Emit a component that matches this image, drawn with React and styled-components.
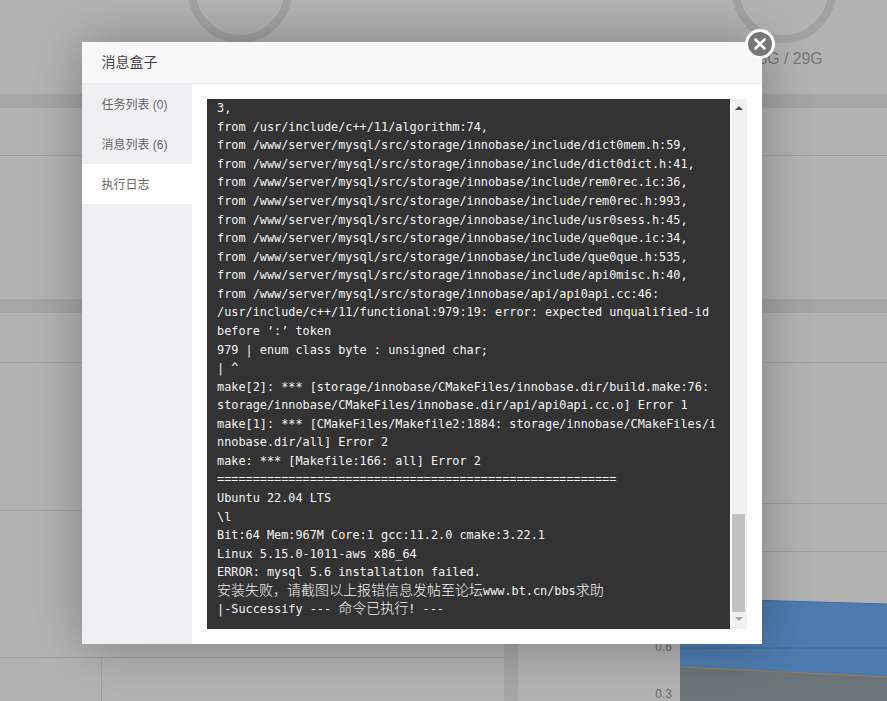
import React from "react";
import styled, { createGlobalStyle } from "styled-components";

const Global = createGlobalStyle`
  html, body { margin: 0; padding: 0; height: 701px; overflow: hidden; background: #fff; }
  * { box-sizing: border-box; }
  body { font-family: "Liberation Sans", "Noto Sans CJK SC", sans-serif; }
`;

const Page = styled.div`
  display: flex;
  flex-direction: column;
  height: 701px;
  overflow: hidden;
`;
const GaugeRow = styled.div`
  height: 94px;
  flex: none;
  display: flex;
  padding-left: 188px;
  gap: 440px;
`;
const Gauge = styled.div`
  width: 104px;
  display: flex;
  flex-direction: column;
  align-items: center;
`;
const Ring = styled.div`
  width: 104px;
  height: 104px;
  flex: none;
  margin-top: -61px;
  border: 8px solid #e8e8e8;
  border-radius: 50%;
`;
const GaugeText = styled.div`
  margin-top: 7px;
  font-size: 15.8px;
  line-height: 18px;
  white-space: nowrap;
  color: #aaa;
`;
const Band = styled.div`
  height: 14px;
  flex: none;
  background: #ececec;
`;
const Stats = styled.div`
  height: 191px;
  flex: none;
  padding-top: 47px;
  & > div { border-top: 1px solid #e4e4e4; }
`;
const Rule = styled.div`
  height: 1px;
`;
const Lower = styled.div`
  flex: 1;
  display: flex;
  min-height: 0;
`;
const LeftPane = styled.div`
  width: 504px;
  flex: none;
  display: flex;
  flex-direction: column;
`;
const Gutter = styled.div`
  width: 14px;
  flex: none;
  background: #ececec;
`;
const RightPane = styled.div`
  flex: 1;
  display: flex;
  flex-direction: column;
`;
const Row = styled.div`
  height: ${(p) => p.$h}px;
  flex: none;
  border-bottom: 1px solid #e4e4e4;
`;
const SplitRow = styled.div`
  flex: 1;
  display: flex;
`;
const SplitCell = styled.div`
  width: 102px;
  border-right: 1px solid #e4e4e4;
`;
const ChartWrap = styled.div`
  flex: 1;
  display: flex;
  padding-top: 35px;
`;
const Axis = styled.div`
  width: 162px;
  flex: none;
  padding: 52px 8px 0 0;
  display: flex;
  flex-direction: column;
  align-items: flex-end;
  gap: 30px;
  font-size: 12px;
  line-height: 17px;
  color: #999;
`;
const Chart = styled.svg`
  flex: 1;
  height: 114px;
  display: block;
`;

const Shade = styled.div`
  position: fixed;
  inset: 0;
  background: rgba(0, 0, 0, 0.3);
`;
const Modal = styled.div`
  position: fixed;
  left: 82px;
  top: 42px;
  width: 680px;
  height: 602px;
  background: #fff;
  box-shadow: 1px 1px 50px rgba(0, 0, 0, 0.3);
  display: flex;
  flex-direction: column;
`;
const Title = styled.div`
  height: 42px;
  flex: none;
  padding-left: 19.5px;
  background: #f8f8f8;
  border-bottom: 1px solid #eee;
  font-size: 14px;
  line-height: 41px;
  color: #444;
`;
const Close = styled.button`
  position: absolute;
  right: -13px;
  top: -13px;
  width: 30px;
  height: 30px;
  padding: 0;
  border: 3px solid #fff;
  border-radius: 50%;
  background: #777;
  display: flex;
  align-items: center;
  justify-content: center;
`;
const Body = styled.div`
  flex: 1;
  display: flex;
  min-height: 0;
`;
const Side = styled.div`
  width: 110px;
  flex: none;
  background: #f0f0f3;
`;
const Tab = styled.div`
  height: 40px;
  padding-left: 19.5px;
  font-size: 12px;
  line-height: 42px;
  color: #666;
  background: ${(p) => (p.$active ? "#fff" : "transparent")};
`;
const Content = styled.div`
  flex: 1;
  display: flex;
  padding: 15px;
`;
const Log = styled.pre`
  flex: 1;
  margin: 0;
  padding: 0.2px 0 0 10px;
  background: #333;
  color: #f4f4f4;
  font-family: "DejaVu Sans Mono", "Noto Sans CJK SC", monospace;
  font-size: 11.85px;
  line-height: 18.56px;
  white-space: pre;
  overflow: hidden;
`;
const Cjk = styled.span`
  font-family: "Noto Sans CJK SC", sans-serif;
  font-size: 14px;
  font-weight: 300;
  line-height: 0;
`;
const Track = styled.div`
  width: 15px;
  flex: none;
  margin-left: 2px;
  background: #f1f1f1;
  display: flex;
  flex-direction: column;
  align-items: center;
  padding-top: 415px;
  position: relative;
`;
const Thumb = styled.div`
  width: 13px;
  height: 98px;
  margin-right: 2px;
  background: #c1c1c1;
`;
const Arrow = styled.div`
  position: absolute;
  left: 3px;
  ${(p) => (p.$down ? "bottom: 8px;" : "top: 7px;")}
  width: 0;
  height: 0;
  border-left: 4px solid transparent;
  border-right: 4px solid transparent;
  ${(p) => (p.$down ? "border-top: 4px solid #a3a3a3;" : "border-bottom: 4px solid #505050;")}
`;

const P = "from /www/server/mysql/src/storage/innobase/";
const before = `3,
from /usr/include/c++/11/algorithm:74,
${P}include/dict0mem.h:59,
${P}include/dict0dict.h:41,
${P}include/rem0rec.ic:36,
${P}include/rem0rec.h:993,
${P}include/usr0sess.h:45,
${P}include/que0que.ic:34,
${P}include/que0que.h:535,
${P}include/api0misc.h:40,
${P}api/api0api.cc:46:
/usr/include/c++/11/functional:979:19: error: expected unqualified-id
before ‘:’ token
979 | enum class byte : unsigned char;
| ^
make[2]: *** [storage/innobase/CMakeFiles/innobase.dir/build.make:76:
storage/innobase/CMakeFiles/innobase.dir/api/api0api.cc.o] Error 1
make[1]: *** [CMakeFiles/Makefile2:1884: storage/innobase/CMakeFiles/i
nnobase.dir/all] Error 2
make: *** [Makefile:166: all] Error 2
========================================================
Ubuntu 22.04 LTS
\\l
Bit:64 Mem:967M Core:1 gcc:11.2.0 cmake:3.22.1
Linux 5.15.0-1011-aws x86_64
ERROR: mysql 5.6 installation failed.
`;

export default function App() {
  return (
    <>
      <Global />
      <Page>
        <GaugeRow>
          <Gauge><Ring /></Gauge>
          <Gauge><Ring /><GaugeText>2.5G / 29G</GaugeText></Gauge>
        </GaugeRow>
        <Band />
        <Stats><Rule /></Stats>
        <Band />
        <Lower>
          <LeftPane>
            <Row $h={50} />
            <Row $h={148} />
            <Row $h={147} />
            <SplitRow><SplitCell /></SplitRow>
          </LeftPane>
          <Gutter />
          <RightPane>
            <Row $h={50} />
            <Row $h={141} />
            <Row $h={48} />
            <ChartWrap>
              <Axis><span>0.6</span><span>0.3</span></Axis>
              <Chart viewBox="0 0 207 114" preserveAspectRatio="none">
                <path d="M0 11 L207 17 L207 114 L0 114 Z" fill="#6fb1fb" />
                <path d="M0 11 L207 17" stroke="#5a9ee8" fill="none" />
                <path d="M0 80 L207 90 L207 114 L0 114 Z" fill="#9aa7ad" />
                <path d="M0 80 L207 90" stroke="#e0b070" fill="none" />
                <path d="M0 61 H207" stroke="#5e97d8" fill="none" />
              </Chart>
            </ChartWrap>
          </RightPane>
        </Lower>
      </Page>
      <Shade />
      <Modal>
        <Title>消息盒子</Title>
        <Close aria-label="关闭">
          <svg width="14" height="14" viewBox="0 0 14 14">
            <path d="M2.5 2.5 L11.5 11.5 M11.5 2.5 L2.5 11.5" stroke="#fff" strokeWidth="2.6" strokeLinecap="round" />
          </svg>
        </Close>
        <Body>
          <Side>
            <Tab>任务列表 (0)</Tab>
            <Tab>消息列表 (6)</Tab>
            <Tab $active>执行日志</Tab>
          </Side>
          <Content>
            <Log>
              {before}
              <Cjk>安装失败，请截图以上报错信息发帖至论坛</Cjk>www.bt.cn/bbs<Cjk>求助</Cjk>{"\n"}
              |-Successify --- <Cjk>命令已执行</Cjk>! ---
            </Log>
            <Track>
              <Arrow />
              <Thumb />
              <Arrow $down />
            </Track>
          </Content>
        </Body>
      </Modal>
    </>
  );
}
